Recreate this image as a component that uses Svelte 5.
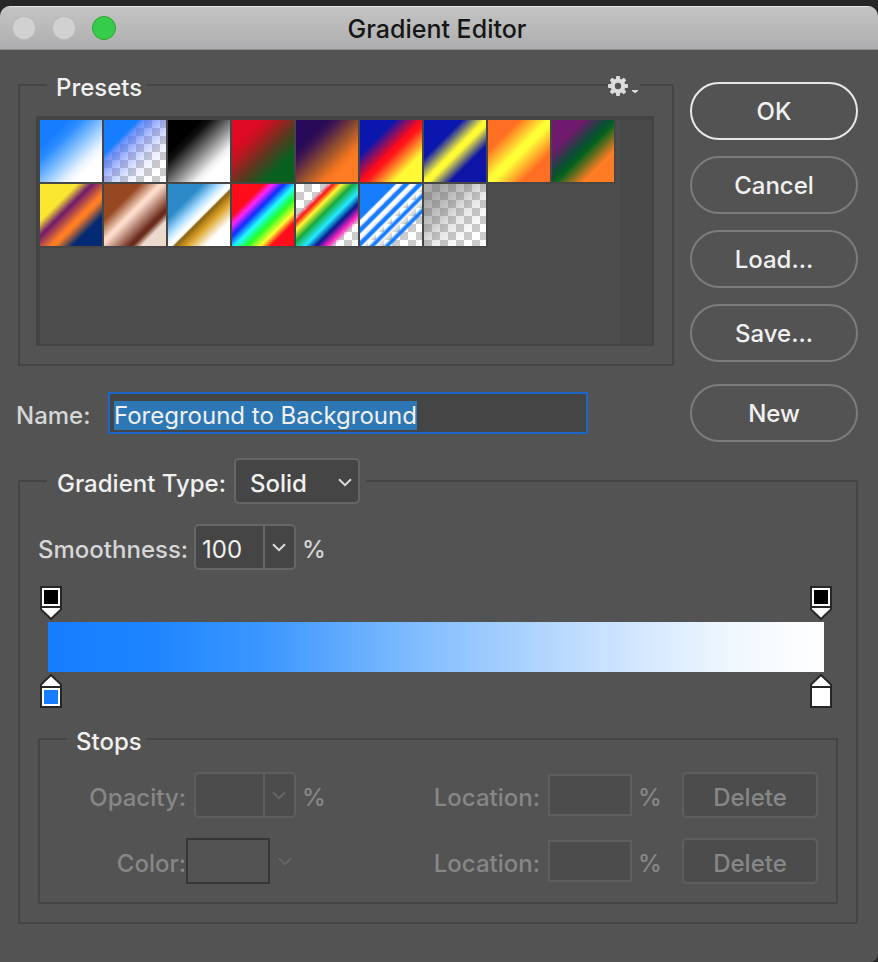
<script>
  import { onMount } from 'svelte';

  const checker =
    'repeating-conic-gradient(#cbcbcb 0 25%, #ffffff 0 50%) 0 0 / 16px 16px';

  const presets = [
    { name: 'Foreground to Background', stops: '#167dff 22%, #2a8cff 33%, #8cc4ff 52%, #e8f3ff 69%, #fff 78%' },
    { name: 'Foreground to Transparent', stops: '#167dff 27%, rgba(60,110,255,.72) 34%, rgba(90,120,255,.42) 50%, rgba(130,150,255,.18) 66%, rgba(255,255,255,0) 82%' },
    { name: 'Black, White', stops: '#000 26%, #111 34%, #808080 53%, #eee 71%, #fff 78%' },
    { name: 'Red, Green', stops: '#df0a24 22%, #c81222 32%, #5c3820 55%, #08601e 76%' },
    { name: 'Violet, Orange', stops: '#290a59 24%, #401850 34%, #96502f 53%, #f0741f 70%, #ff7c24 78%' },
    { name: 'Blue, Red, Yellow', stops: '#0b16ad 28%, #ff0b1a 50%, #ff1b1b 55%, #fffa34 77%' },
    { name: 'Blue, Yellow, Blue', stops: '#0b16ad 31%, #fffa34 49%, #fffa34 54%, #0e14a6 71%' },
    { name: 'Orange, Yellow, Orange', stops: '#ff6e22 25%, #ffff38 48%, #ffff38 54%, #ff6e22 77%' },
    { name: 'Violet, Green, Orange', stops: '#6f1a6c 26%, #0b4a35 44%, #06641d 53%, #9a7220 66%, #ff7c24 75%' },
    { name: 'Yellow, Violet, Orange, Blue', stops: '#f9e631 30%, #6f1b6c 42%, #fd7c24 58%, #fd7c24 62%, #032a72 76%' },
    { name: 'Copper', stops: '#964822 29%, #fbdbca 45%, #fbdbca 48%, #6c2c1c 70%, #6c2c1c 73%, #eddacf 80%' },
    { name: 'Chrome', stops: '#2c8ac9 28%, #a8dcff 41%, #fff 50%, #fff 53%, #8c6414 55%, #dda42b 65%, #fff 80%' },
    { name: 'Spectrum', stops: '#ff0d1b 26%, #ff24ff 33%, #0e2bff 42%, #20ffff 52%, #24ff26 62%, #ffff30 73%, #ff0d1b 81%' },
    { name: 'Transparent Rainbow', stops: 'rgba(255,16,24,0) 25%, #ff1018 30%, #fff832 37%, #18a83a 46%, #23eaff 57%, #061890 66%, #ff24c0 75%, rgba(255,36,192,0) 81%' },
    { name: 'Transparent Stripes', stops: '#167dff 28%, #fff 30%, #fff 33%, rgba(200,200,255,.6) 34%, #167dff 36%, #167dff 39%, #fff 41%, #fff 43%, rgba(200,200,255,.4) 45%, #167dff 47%, #167dff 50%, #fff 52%, rgba(255,255,255,0) 56%, #167dff 59%, #167dff 61%, rgba(255,255,255,.8) 63%, rgba(255,255,255,0) 68%, #167dff 71%, #167dff 73%, rgba(255,255,255,0) 75%' },
    { name: 'Neutral Density', stops: 'rgba(110,110,110,.6) 15%, rgba(120,120,120,.45) 35%, rgba(140,140,140,.2) 55%, rgba(255,255,255,0) 80%' }
  ];

  let name = $state('Foreground to Background');
  let smoothness = $state('100');
  let nameField;

  onMount(() => {
    nameField.focus();
    nameField.select();
  });
</script>

{#snippet chevron()}
  <svg class="chevron" width="14" height="9" viewBox="0 0 14 9" aria-hidden="true">
    <path d="M1 1.2 7 7.2 13 1.2" fill="none" stroke="currentColor" stroke-width="2" />
  </svg>
{/snippet}

{#snippet opacityStop(label)}
  <button class="stop" aria-label={label}>
    <svg width="22" height="34" viewBox="0 0 22 34" aria-hidden="true">
      <path d="M1 1H21V23.4L11 33 1 23.4Z" fill="#fff" stroke="#262626" stroke-width="2" />
      <path d="M1 21H21" stroke="#262626" stroke-width="2" />
      <rect x="4" y="4" width="14" height="14" />
    </svg>
  </button>
{/snippet}

{#snippet colorStop(label, color)}
  <button class="stop" aria-label={label}>
    <svg width="22" height="34" viewBox="0 0 22 34" aria-hidden="true">
      <path d="M1 33H21V10.600L11 1 1 10.600Z" fill="#fff" stroke="#262626" stroke-width="2" />
      <path d="M1 13H21" stroke="#262626" stroke-width="2" />
      <rect x="4" y="16" width="14" height="14" fill={color} />
    </svg>
  </button>
{/snippet}

<div class="desktop">
  <main class="window">
    <header class="titlebar">
      <div class="lights">
        <button aria-label="Close"></button>
        <button aria-label="Minimize"></button>
        <button class="zoom" aria-label="Zoom"></button>
      </div>
      <h1>Gradient Editor</h1>
    </header>

    <div class="body">
      <div class="upper">
        <div class="left">
          <fieldset class="presets">
            <legend>Presets</legend>
            <button class="gear" aria-label="Preset options">
              <svg width="32" height="20" viewBox="0 0 32 20" aria-hidden="true">
                <g fill="#dcdcdc">
                  {#each [0, 45, 90, 135] as angle}
                    <rect x="8" y="0" width="4" height="20" rx="1" transform="rotate({angle} 10 10)" />
                  {/each}
                  <circle cx="10" cy="10" r="7.400" />
                  <path d="M24 14H30V15L27.500 17H26.500L24 15Z" />
                </g>
                <circle cx="10" cy="10" r="3.200" fill="#535353" />
              </svg>
            </button>
            <div class="list">
              <div class="swatches">
                {#each presets as preset}
                  <button
                    class="swatch"
                    aria-label={preset.name}
                    style="background: linear-gradient(135deg, {preset.stops}), {checker}"
                  ></button>
                {/each}
              </div>
              <div class="track"></div>
            </div>
          </fieldset>

          <div class="name">
            <label for="name">Name:</label>
            <input id="name" type="text" spellcheck="false" bind:this={nameField} bind:value={name} />
          </div>
        </div>

        <div class="actions">
          <button class="primary">OK</button>
          <button>Cancel</button>
          <button>Load...</button>
          <button>Save...</button>
          <button class="new">New</button>
        </div>
      </div>

      <fieldset class="gradient">
        <legend class="type">
          <label for="type">Gradient Type:</label>
          <span class="select">
            <select id="type">
              <option>Solid</option>
              <option>Noise</option>
            </select>
            {@render chevron()}
          </span>
        </legend>

        <div class="row smooth">
          <label for="smoothness">Smoothness:</label>
          <div class="combo">
            <input id="smoothness" type="text" bind:value={smoothness} />
            <button aria-label="Smoothness slider">{@render chevron()}</button>
          </div>
          <span class="unit">%</span>
        </div>

        <div class="ramp">
          <div class="markers">
            {@render opacityStop('Opacity stop, start')}
            {@render opacityStop('Opacity stop, end')}
          </div>
          <div class="bar"></div>
          <div class="markers">
            {@render colorStop('Color stop, start', '#167dff')}
            {@render colorStop('Color stop, end', '#ffffff')}
          </div>
        </div>

        <fieldset class="stops" disabled>
          <legend>Stops</legend>
          <div class="row">
            <label for="opacity">Opacity:</label>
            <div class="combo">
              <input id="opacity" type="text" />
              <button aria-label="Opacity slider">{@render chevron()}</button>
            </div>
            <span class="unit">%</span>
            <label class="location" for="opacity-location">Location:</label>
            <input class="field" id="opacity-location" type="text" />
            <span class="unit">%</span>
            <button class="delete">Delete</button>
          </div>
          <div class="row">
            <label for="color">Color:</label>
            <button class="well" id="color" aria-label="Color"></button>
            <button class="well-menu" aria-label="Color source">{@render chevron()}</button>
            <label class="location" for="color-location">Location:</label>
            <input class="field" id="color-location" type="text" />
            <span class="unit">%</span>
            <button class="delete">Delete</button>
          </div>
        </fieldset>
      </fieldset>
    </div>
  </main>
</div>

<style>
  :global(body) {
    margin: 0;
    background: #262626;
  }

  * {
    box-sizing: border-box;
  }

  .desktop {
    min-height: 100vh;
    display: flex;
    flex-direction: column;
    padding-top: 6px;
    background: #262626;
    font: 500 24px/28px Inter, 'Liberation Sans', sans-serif;
    color: #f0f0f0;
  }

  button,
  input,
  select {
    font: inherit;
    color: inherit;
    margin: 0;
    padding: 0;
    border: 0;
    border-radius: 0;
    background: none;
    outline: none;
    appearance: none;
  }

  fieldset {
    min-width: 0;
    margin: 0;
    padding: 0 18px 18px 16px;
    border: 2px solid #444;
    border-radius: 2px;
  }

  legend {
    margin-left: 11px;
    padding: 6px 5px 0 9px;
  }

  svg {
    display: block;
  }

  .window {
    flex: 1;
    display: flex;
    flex-direction: column;
    border-radius: 10px 10px 8px 0;
    overflow: hidden;
    background: #535353;
  }

  .titlebar {
    display: grid;
    grid-template-columns: 1fr auto 1fr;
    align-items: center;
    height: 44px;
    padding: 0 16px 0 12px;
    border-top: 1px solid #e4e4e4;
    border-bottom: 1px solid #8c8c8c;
    background: linear-gradient(#c3c3c4, #aeaeb0);
  }

  h1 {
    margin: 0;
    padding-top: 2px;
    font-size: 25px;
    font-weight: 500;
    color: #161616;
  }

  .lights {
    display: flex;
    gap: 16px;
  }

  .lights button {
    width: 24px;
    height: 24px;
    border: 1px solid #bababa;
    border-radius: 50%;
    background: #d1d1d1;
  }

  .lights .zoom {
    border-color: #27a534;
    background: #35cc4b;
  }

  .body {
    flex: 1;
    padding: 18px 20px 38px 18px;
  }

  .upper {
    display: grid;
    grid-template-columns: 1fr 168px;
    gap: 16px;
  }

  .presets {
    position: relative;
  }

  .gear {
    position: absolute;
    top: -26px;
    right: 32px;
    background: #535353;
  }

  .list {
    display: flex;
    justify-content: space-between;
    margin-top: 14px;
    height: 230px;
    border: solid #444;
    border-width: 4px 2px 2px 4px;
    background: #4d4d4d;
  }

  .swatches {
    flex: 1;
    display: flex;
    flex-wrap: wrap;
    align-content: flex-start;
  }

  .swatch {
    width: 62px;
    height: 62px;
    margin: 0 2px 2px 0;
    box-shadow: 0 0 0 2px #464646;
  }

  .track {
    width: 32px;
    background: #494949;
  }

  .name {
    display: flex;
    align-items: center;
    gap: 20px;
    margin: 26px 86px 0 -2px;
    color: #d6d6d6;
  }

  .name label {
    width: 72px;
    padding-top: 6px;
  }

  .name input {
    flex: 1;
    min-width: 0;
    height: 42px;
    padding: 4px 4px 0;
    border: 2px solid #1c66c9;
    background: #454545;
    font-weight: 400;
    line-height: 32px;
    color: #f0f0f0;
  }

  .name input::selection {
    background: rgba(45, 119, 181, 0.996);
    color: #f0f0f0;
  }

  .actions {
    display: flex;
    flex-direction: column;
    gap: 16px;
    padding-top: 14px;
  }

  .actions button {
    height: 58px;
    padding-top: 2px;
    border: 2px solid #7c7c7c;
    border-radius: 29px;
  }

  .actions .primary {
    border-color: #e8e8e8;
  }

  .actions .new {
    margin-top: 6px;
  }

  .gradient {
    margin-top: 16px;
    padding-left: 18px;
  }

  .type {
    display: flex;
    align-items: center;
    gap: 8px;
    margin-left: 9px;
    padding: 0 6px 0 10px;
  }

  .type label {
    padding-top: 6px;
  }

  .select {
    position: relative;
    display: flex;
    width: 126px;
    height: 46px;
  }

  .select select {
    flex: 1;
    padding: 6px 0 0 14px;
    border: 2px solid #666;
    border-radius: 5px;
    background: #454545;
  }

  .chevron {
    color: #dcdcdc;
  }

  .select .chevron {
    position: absolute;
    top: 20px;
    right: 8px;
    pointer-events: none;
  }

  .row {
    display: flex;
    align-items: center;
    height: 46px;
    margin-top: 20px;
  }

  .row label {
    width: 148px;
    padding-top: 6px;
    text-align: right;
  }

  .smooth {
    color: #d6d6d6;
  }

  .combo {
    display: flex;
    width: 102px;
    height: 46px;
    margin-left: 8px;
    border: 2px solid #666;
    border-radius: 5px;
    background: #454545;
  }

  .combo input {
    flex: 1;
    min-width: 0;
    padding: 6px 0 0 6px;
    font-weight: 400;
    color: #f0f0f0;
  }

  .combo button {
    display: grid;
    place-items: center;
    width: 31px;
    padding-right: 2px;
    border-left: 2px solid #666;
  }

  .unit {
    width: 44px;
    margin-left: 6px;
    padding-top: 6px;
  }

  .ramp {
    display: grid;
    gap: 2px;
    margin: 16px 6px 0 2px;
  }

  .markers {
    display: flex;
    justify-content: space-between;
  }

  .bar {
    height: 50px;
    margin: 0 8px;
    background: linear-gradient(90deg, #167dff, #1d84ff 13%, #3c97ff 28%, #82bdff 48%, #c4dfff 70%, #f0f7ff 88%, #fff);
  }

  .stops {
    margin-top: 14px;
  }

  .stops legend {
    color: #f0f0f0;
  }

  .stops .row {
    color: #878787;
  }

  .stops legend + .row {
    margin-top: 16px;
  }

  .stops .row label {
    width: 130px;
  }

  .stops .combo,
  .stops .combo button,
  .field,
  .delete {
    border-color: #5e5e5e;
  }

  .stops .combo,
  .field,
  .delete {
    background: #4c4c4c;
  }

  .stops .chevron {
    color: #666;
  }

  .stops .row .location {
    margin-left: auto;
  }

  .field {
    width: 84px;
    height: 42px;
    margin-left: 8px;
    border: 2px solid #5e5e5e;
  }

  .delete {
    width: 136px;
    height: 46px;
    padding-top: 6px;
    border: 2px solid #5e5e5e;
    border-radius: 5px;
  }

  .well {
    width: 84px;
    height: 46px;
    border: 2px solid #363636;
  }

  .well-menu {
    margin-left: 8px;
  }
</style>
